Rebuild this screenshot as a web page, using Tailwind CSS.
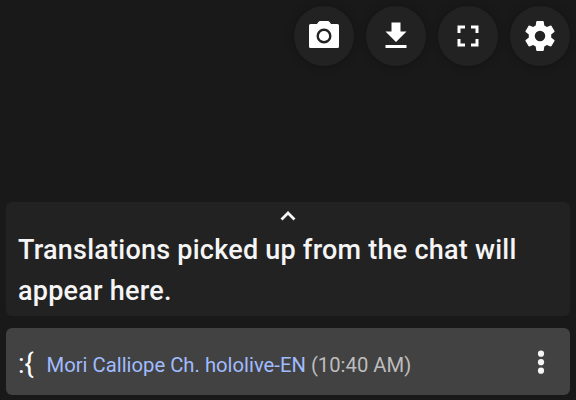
<!DOCTYPE html>
<html lang="en">
<head>
    <meta charset="UTF-8">
    <meta name="viewport" content="width=device-width, initial-scale=1.0">
    <title>Chat Translations</title>
    <script src="https://cdn.jsdelivr.net/npm/@tailwindcss/browser@4"></script>
</head>
<body class="bg-[#191919] h-[400px] overflow-hidden font-['Roboto',sans-serif]">
    <div class="h-full flex flex-col px-1.5 pt-1.5 pb-[5px]">

        <!-- Toolbar -->
        <div class="flex justify-end gap-3 text-white">
            <button class="w-15 h-15 rounded-full bg-[#222222] shadow-[0_1px_8px_rgba(0,0,0,0.25)] flex items-center justify-center">
                <svg class="w-9 h-9" fill="currentColor" viewBox="0 0 24 24">
                    <path d="M9.400 2Q8.800 2 8.400 2.500L7.300 4H3Q2 4 2 5v14q0 1 1 1h18q1 0 1-1V5q0-1-1-1h-4.300L15.600 2.500Q15.200 2 14.600 2zM12 17a5 5 0 110-10 5 5 0 010 10z"/>
                    <circle cx="12" cy="12" r="3.400"/>
                </svg>
            </button>
            <button class="w-15 h-15 rounded-full bg-[#222222] shadow-[0_1px_8px_rgba(0,0,0,0.25)] flex items-center justify-center">
                <svg class="w-9 h-9" fill="currentColor" viewBox="0 0 24 24">
                    <path d="M5 20h14v-2H5v2zM19 9h-4V3H9v6H5l7 7 7-7z"/>
                </svg>
            </button>
            <button class="w-15 h-15 rounded-full bg-[#222222] shadow-[0_1px_8px_rgba(0,0,0,0.25)] flex items-center justify-center">
                <svg class="w-9 h-9" fill="currentColor" viewBox="0 0 24 24">
                    <path d="M5 5h5v2H7v3H5V5zM14 5h5v5h-2V7h-3V5zM17 14h2v5h-5v-2h3v-3zM10 17v2H5v-5h2v3h3z"/>
                </svg>
            </button>
            <button class="w-15 h-15 rounded-full bg-[#222222] shadow-[0_1px_8px_rgba(0,0,0,0.25)] flex items-center justify-center">
                <svg class="w-9 h-9" fill="currentColor" viewBox="0 0 24 24">
                    <path d="M12 15.500A3.500 3.500 0 0 1 8.500 12 3.500 3.500 0 0 1 12 8.500 3.500 3.500 0 0 1 15.500 12 3.500 3.500 0 0 1 12 15.500M19.430 12.970C19.470 12.650 19.500 12.330 19.500 12S19.470 11.340 19.430 11L21.540 9.370C21.730 9.220 21.780 8.950 21.660 8.730L19.660 5.270C19.540 5.050 19.270 4.960 19.050 5.050L16.560 6.050C16.040 5.660 15.500 5.320 14.870 5.070L14.500 2.420C14.460 2.180 14.250 2 14 2H10C9.750 2 9.540 2.180 9.500 2.420L9.130 5.070C8.500 5.320 7.960 5.660 7.440 6.050L4.950 5.050C4.730 4.960 4.460 5.050 4.340 5.270L2.340 8.730C2.210 8.950 2.270 9.220 2.460 9.370L4.570 11C4.530 11.340 4.500 11.670 4.500 12S4.530 12.650 4.570 12.970L2.460 14.630C2.270 14.780 2.210 15.050 2.340 15.270L4.340 18.730C4.460 18.950 4.730 19.030 4.950 18.950L7.440 17.940C7.960 18.340 8.500 18.680 9.130 18.930L9.500 21.580C9.540 21.820 9.750 22 10 22H14C14.250 22 14.460 21.820 14.500 21.580L14.870 18.930C15.500 18.670 16.040 18.340 16.560 17.940L19.050 18.950C19.270 19.030 19.540 18.950 19.660 18.730L21.660 15.270C21.780 15.050 21.730 14.780 21.540 14.630L19.430 12.970Z"/>
                </svg>
            </button>
        </div>

        <!-- Translation panel -->
        <div class="mt-auto h-[114px] rounded-md bg-[#222222] px-3 text-[#f5f5f5]">
            <div class="h-7 flex justify-center items-center">
                <svg class="w-6 h-6" fill="none" stroke="currentColor" stroke-width="2.800" viewBox="0 0 24 24">
                    <path d="M5.500 15.500L12 9l6.500 6.500"/>
                </svg>
            </div>
            <p class="text-[27px] leading-[41px] tracking-[0.23px] font-medium">Translations picked up from the chat will appear here.</p>
        </div>

        <!-- Chat message -->
        <div class="mt-3 h-[67px] rounded-md bg-[#424242] px-3 flex items-center">
            <span class="w-[28.5px] pt-1.5 text-[27px] leading-none text-white">:{</span>
            <p class="pt-2 text-[20.25px] whitespace-nowrap text-[#bdbdbd]"><span class="text-[#a0bcff]">Mori Calliope Ch. hololive-EN</span> (10:40 AM)</p>
            <svg class="ml-auto w-[34px] h-9" fill="#f5f5f5" viewBox="0 0 34 36">
                <circle cx="17" cy="9.700" r="3.100"/>
                <circle cx="17" cy="18.200" r="3.100"/>
                <circle cx="17" cy="26.700" r="3.100"/>
            </svg>
        </div>
    </div>
</body>
</html>
